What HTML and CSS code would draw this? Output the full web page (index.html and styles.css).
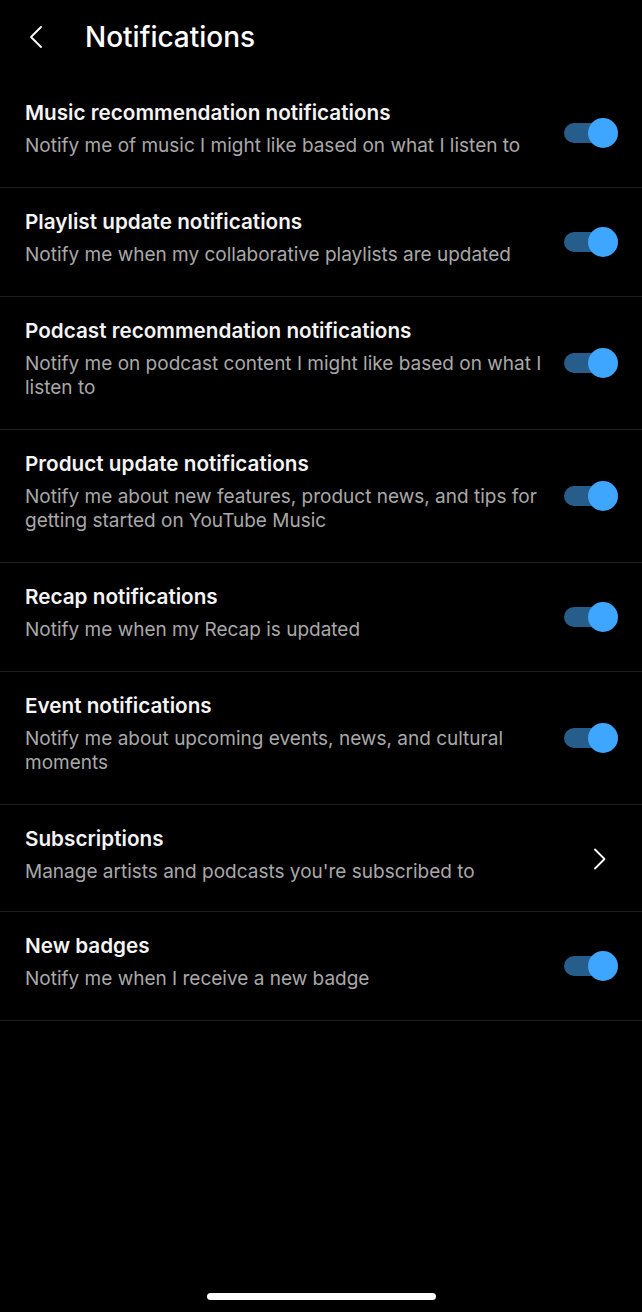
FILE: index.html
```html
<!DOCTYPE html>
<html lang="en">
<head>
<meta charset="utf-8">
<title>Notifications</title>
<link rel="stylesheet" href="styles.css">
</head>
<body>
<div class="screen">
  <header class="header">
    <button class="back" aria-label="Back">
      <svg width="14" height="22" viewBox="0 0 14 22"><path d="M12 1 L2 11 L12 21" fill="none" stroke="#fff" stroke-width="1.8" stroke-linecap="round" stroke-linejoin="round"/></svg>
    </button>
    <h1 class="title">Notifications</h1>
  </header>
  <ul class="list">
    <li class="row">
      <div class="text"><div class="row-title">Music recommendation notifications</div><div class="row-sub">Notify me of music I might like based on what I listen to</div></div>
      <div class="toggle"><span class="track"></span><span class="thumb"></span></div>
    </li>
    <li class="row">
      <div class="text"><div class="row-title">Playlist update notifications</div><div class="row-sub">Notify me when my collaborative playlists are updated</div></div>
      <div class="toggle"><span class="track"></span><span class="thumb"></span></div>
    </li>
    <li class="row">
      <div class="text"><div class="row-title">Podcast recommendation notifications</div><div class="row-sub">Notify me on podcast content I might like based on what I listen to</div></div>
      <div class="toggle"><span class="track"></span><span class="thumb"></span></div>
    </li>
    <li class="row">
      <div class="text"><div class="row-title">Product update notifications</div><div class="row-sub">Notify me about new features, product news, and tips for getting started on YouTube Music</div></div>
      <div class="toggle"><span class="track"></span><span class="thumb"></span></div>
    </li>
    <li class="row">
      <div class="text"><div class="row-title">Recap notifications</div><div class="row-sub">Notify me when my Recap is updated</div></div>
      <div class="toggle"><span class="track"></span><span class="thumb"></span></div>
    </li>
    <li class="row">
      <div class="text"><div class="row-title">Event notifications</div><div class="row-sub">Notify me about upcoming events, news, and cultural moments</div></div>
      <div class="toggle"><span class="track"></span><span class="thumb"></span></div>
    </li>
    <li class="row row-link">
      <div class="text"><div class="row-title">Subscriptions</div><div class="row-sub">Manage artists and podcasts you're subscribed to</div></div>
      <div class="chev">
        <svg width="14" height="22" viewBox="0 0 14 22"><path d="M2 1.5 L11.5 11 L2 20.5" fill="none" stroke="#fff" stroke-width="1.8" stroke-linecap="round" stroke-linejoin="round"/></svg>
      </div>
    </li>
    <li class="row">
      <div class="text"><div class="row-title">New badges</div><div class="row-sub">Notify me when I receive a new badge</div></div>
      <div class="toggle"><span class="track"></span><span class="thumb"></span></div>
    </li>
  </ul>
  <div class="home-indicator"></div>
</div>
</body>
</html>
```
FILE: styles.css
```css
* { box-sizing: border-box; }
html, body {
  margin: 0;
  padding: 0;
  background: #000;
}
body {
  font-family: Inter, Roboto, "Liberation Sans", Arial, sans-serif;
  color: #f1f1f1;
}
.screen {
  width: 642px;
  min-height: 1312px;
  background: #000;
}
.header {
  height: 79px;
  display: flex;
  align-items: center;
  padding-left: 29px;
  padding-bottom: 6px;
}
.back {
  background: none;
  border: 0;
  padding: 0;
  width: 14px;
  height: 22px;
  display: flex;
  margin-right: 42px;
  cursor: pointer;
}
.title {
  margin: 0;
  font-size: 28px;
  font-weight: 500;
  color: #fff;
  letter-spacing: 0;
}
.list {
  list-style: none;
  margin: 0;
  padding: 0;
}
.row {
  display: flex;
  align-items: center;
  padding: 21px 24px 29px 25px;
  border-bottom: 1px solid #1e1e1e;
}
.row-link {
  padding-bottom: 27px;
}
.text {
  flex: 1;
  min-width: 0;
  padding-right: 16px;
}
.row-title {
  font-size: 20.7px;
  line-height: 26px;
  font-weight: 600;
  color: #f4f4f4;
}
.row-sub {
  margin-top: 8px;
  font-size: 19px;
  line-height: 24px;
  color: #a9a9a9;
}
.toggle {
  position: relative;
  width: 54px;
  height: 30px;
  flex: none;
  margin-top: 8px;
}
.track {
  position: absolute;
  left: 0;
  top: 5px;
  width: 48px;
  height: 20px;
  border-radius: 10px;
  background: #275d8b;
}
.thumb {
  position: absolute;
  right: 0;
  top: 0;
  width: 30px;
  height: 30px;
  border-radius: 50%;
  background: #3ea6ff;
}
.chev {
  width: 54px;
  display: flex;
  justify-content: flex-end;
  padding-right: 11px;
  margin-top: 8px;
}
.home-indicator {
  position: fixed;
  left: 207px;
  bottom: 12px;
  width: 229px;
  height: 7px;
  border-radius: 4px;
  background: #fff;
}
```
